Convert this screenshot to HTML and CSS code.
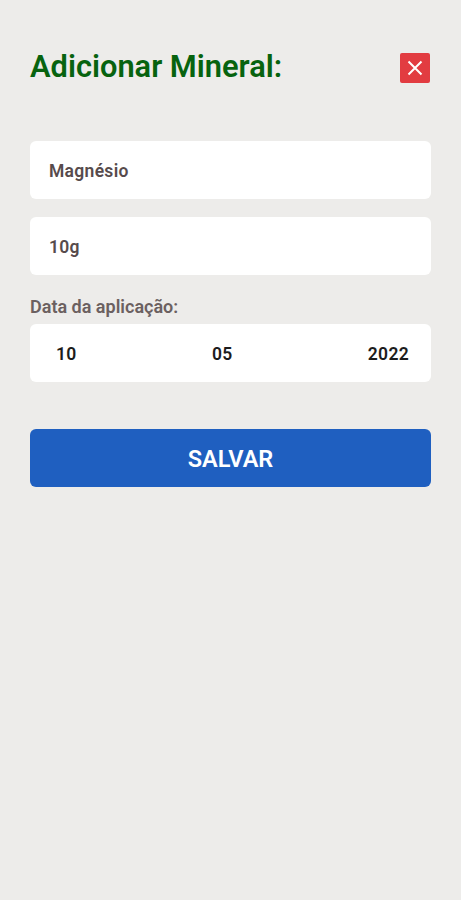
FILE: index.html
```html
<!DOCTYPE html>
<html lang="pt-BR">
<head>
    <meta charset="UTF-8">
    <meta name="viewport" content="width=device-width, initial-scale=1.0">
    <title>Adicionar Mineral</title>
    <link rel="stylesheet" href="styles.css">
</head>
<body>
    <header class="header">
        <h1 class="title">Adicionar Mineral:</h1>
        <button type="button" class="close" aria-label="Fechar">
            <svg width="16" height="16" viewBox="0 0 16 16" fill="none" stroke="currentColor" stroke-width="2">
                <path d="M1.5 1.5l13 13M14.5 1.5l-13 13"/>
            </svg>
        </button>
    </header>

    <main class="form">
        <div class="field">Magnésio</div>
        <div class="field">10g</div>

        <p class="label">Data da aplicação:</p>
        <div class="field field--date">
            <span>10</span>
            <span>05</span>
            <span>2022</span>
        </div>

        <button type="submit" class="button">SALVAR</button>
    </main>
</body>
</html>
```
FILE: styles.css
```css
:root {
    --clr-bg: #edecea;
    --clr-surface: #ffffff;
    --clr-title: #07630f;
    --clr-text: #574b4c;
    --clr-label: #6b6060;
    --clr-date: #1c1c1c;
    --clr-primary: #1f5fc0;
    --clr-danger: #e23c41;
    --border-radius: 6px;
}

* {
    margin: 0;
    padding: 0;
    box-sizing: border-box;
}

body {
    font-family: Roboto, sans-serif;
    background: var(--clr-bg);
    color: var(--clr-text);
    min-height: 100vh;
    padding: 48px 30px 0;
}

.header {
    display: flex;
    justify-content: space-between;
    align-items: center;
    height: 40px;
    margin-bottom: 53px;
}

.title {
    padding-bottom: 3px;
    font-size: 30.8px;
    line-height: 36px;
    font-weight: 600;
    color: var(--clr-title);
}

.close {
    display: flex;
    align-items: center;
    justify-content: center;
    width: 30px;
    height: 30px;
    margin-right: 1px;
    border: none;
    border-radius: 2px;
    background: var(--clr-danger);
    color: white;
    cursor: pointer;
}

.form {
    display: flex;
    flex-direction: column;
}

.field {
    display: flex;
    align-items: center;
    height: 58px;
    margin-bottom: 18px;
    padding: 2px 19px 0;
    border-radius: var(--border-radius);
    background: var(--clr-surface);
    font-size: 17.5px;
    font-weight: 600;
    letter-spacing: 0.3px;
}

.label {
    margin: 2px 0 5px;
    color: var(--clr-label);
    font-size: 18px;
    line-height: 24px;
    font-weight: 600;
}

.field--date {
    justify-content: space-between;
    margin-bottom: 47px;
    padding: 2px 22px 0 26px;
    color: var(--clr-date);
}

.button {
    height: 58px;
    padding-top: 1px;
    border: none;
    border-radius: var(--border-radius);
    background: var(--clr-primary);
    color: white;
    font-family: inherit;
    font-size: 23.5px;
    font-weight: 600;
    cursor: pointer;
}
```
